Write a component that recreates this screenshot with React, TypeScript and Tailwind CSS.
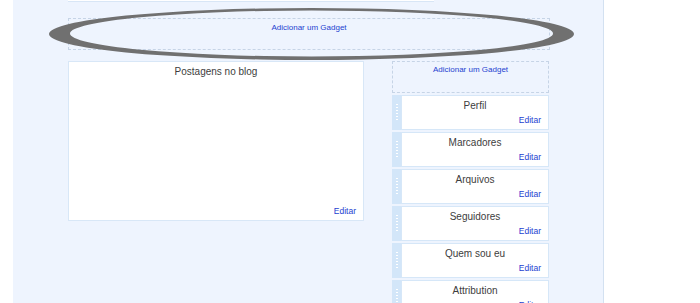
const widgets = ["Perfil", "Marcadores", "Arquivos", "Seguidores", "Quem sou eu", "Attribution"];

const AddGadget = ({ className }: { className: string }) => (
    <div className={`flex justify-center border border-dashed border-[#c6d4e6] ${className}`}>
        <a className="text-[8px] leading-[10px] text-[#1d3fd0] cursor-pointer">Adicionar um Gadget</a>
    </div>
);

const Widget = ({ title }: { title: string }) => (
    <div className="flex h-[35px] w-[157px] shrink-0">
        <div className="w-[9px] bg-[#d3e6f9] flex flex-col items-center pt-[9px] gap-[2px]">
            {[0, 1, 2, 3, 4, 5].map((i) => (
                <span key={i} className="block w-[2px] h-[1px] bg-white" />
            ))}
        </div>
        <div className="flex-1 bg-white border border-[#d6e7f8] flex flex-col px-[7px] pt-[4px]">
            <div className="text-center text-[10px] leading-[12px] text-[#3d3d3d]">{title}</div>
            <div className="text-right text-[8.5px] leading-[10px] mt-[3px] text-[#1d3fd0]">Editar</div>
        </div>
    </div>
);

const App = (): JSX.Element => {
    return (
        <div className="w-[700px] h-[303px] bg-white overflow-hidden font-['Liberation_Sans',Arial,sans-serif]">
            <div className="relative ml-[13px] w-[591px] h-[303px] bg-[#eef4fe] border-r border-[#d3e1f1] pl-[55px]">
                <div className="w-[366px] h-[2px] bg-white border-b border-[#d8e6f6]" />
                <AddGadget className="mt-[16px] w-[482px] h-[32px] pt-[4px]" />
                <div className="mt-[11px] flex gap-[28px]">
                    <div className="w-[296px] h-[160px] bg-white border border-[#d8e7f7] flex flex-col justify-between px-[7px] pt-[4px] pb-[4px]">
                        <div className="text-center text-[10px] leading-[12px] text-[#3d3d3d]">Postagens no blog</div>
                        <div className="text-right text-[8.5px] leading-[10px] text-[#1d3fd0]">Editar</div>
                    </div>
                    <div className="flex flex-col gap-[2px]">
                        <AddGadget className="w-[157px] h-[32px] shrink-0 pt-[3px]" />
                        {widgets.map((w) => (
                            <Widget key={w} title={w} />
                        ))}
                    </div>
                </div>
                <svg className="absolute left-0 top-0 pointer-events-none" width="591" height="70" viewBox="0 0 591 70">
                    <path
                        fillRule="evenodd"
                        fill="#707070"
                        d="M36 34 A262.5 26 0 1 0 561 34 A262.5 26 0 1 0 36 34 Z M57 33.5 A241.5 23 0 1 0 540 33.5 A241.5 23 0 1 0 57 33.5 Z"
                    />
                </svg>
            </div>
        </div>
    );
};

export default App;
